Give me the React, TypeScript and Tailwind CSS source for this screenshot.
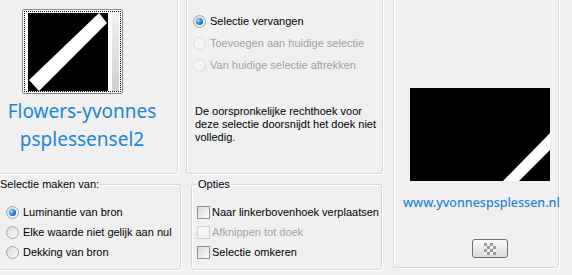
import React from 'react';

const etched =
  'border border-[#d3d8dd] rounded-[3px] shadow-[inset_1px_1px_0_#ffffff,1px_1px_0_#ffffff]';

function Radio({ checked, disabled, label }: { checked?: boolean; disabled?: boolean; label: string }) {
  return (
    <div className="flex items-center gap-[4px] h-[20px]">
      <span
        className={
          'w-[13px] h-[13px] rounded-full border flex items-center justify-center shrink-0 ' +
          (disabled
            ? 'border-[#dadada] bg-[#f3f3f3]'
            : 'border-[#a4a8ac] bg-gradient-to-br from-[#d6d8da] to-[#fbfbfb]')
        }
      >
        {checked && (
          <span className="w-[7px] h-[7px] rounded-full bg-[radial-gradient(circle_at_35%_35%,#9fd8ff,#1a74c8_60%,#0b4f94)]" />
        )}
      </span>
      <span className={disabled ? 'text-[#a2a2a2]' : 'text-black'}>{label}</span>
    </div>
  );
}

function Check({ disabled, label }: { disabled?: boolean; label: string }) {
  return (
    <div className="flex items-center gap-[2px] h-[20px]">
      <span
        className={
          'w-[13px] h-[13px] border shrink-0 ' +
          (disabled
            ? 'border-[#d0d0d0] bg-[#f4f4f4]'
            : 'border-[#8e9296] bg-gradient-to-br from-[#d4d6d8] to-[#ffffff]')
        }
      />
      <span className={disabled ? 'text-[#a2a2a2]' : 'text-black'}>{label}</span>
    </div>
  );
}

function Thumb() {
  return (
    <div className="w-[101px] h-[85px] border border-[#8a8a8a] rounded-[2px] bg-white p-[1px]">
      <div className="w-full h-full border border-dotted border-black pl-[3px] pt-[1px]">
        <svg width="91" height="78" viewBox="0 0 91 78">
          <rect x="0" y="0" width="80" height="78" fill="#000" />
          <rect x="80" y="0" width="4" height="78" fill="#fff" />
          <defs>
            <linearGradient id="sb" x1="0" y1="0" x2="0" y2="1">
              <stop offset="0" stopColor="#f2f2f2" />
              <stop offset="1" stopColor="#cfcfcf" />
            </linearGradient>
          </defs>
          <rect x="84" y="0" width="7" height="78" fill="url(#sb)" />
          <polygon points="1,67 11,78 79,10 71,0" fill="#fff" />
        </svg>
      </div>
    </div>
  );
}

function CheckerButton() {
  return (
    <button className="w-[36px] h-[19px] border border-[#707070] rounded-[3px] bg-gradient-to-b from-[#fbfbfb] to-[#d9d9d9] flex items-center justify-center">
      <svg width="12" height="12" viewBox="0 0 12 12">
        <rect width="12" height="12" fill="#f4f4f4" />
        {[0, 1, 2, 3].map((r) =>
          [0, 1, 2, 3].map((c) =>
            (r + c) % 2 === 0 ? (
              <rect key={r + '-' + c} x={c * 3} y={r * 3} width="3" height="3" fill="#9a9a9a" />
            ) : null
          )
        )}
      </svg>
    </button>
  );
}

export default function App() {
  const blue = "font-['Noto_Sans',sans-serif] text-[#2185d9]";
  return (
    <div className="w-[572px] h-[275px] bg-[#f0f0f0] overflow-hidden font-['Liberation_Sans',Arial,sans-serif] text-[11px] leading-[13px] text-black">
      <div className="flex -mt-[3px] -ml-[3px]">
        {/* left column */}
        <div className="w-[189px] flex flex-col">
          <div className={etched + ' w-[181px] h-[177px] pl-[24px] pt-[11px]'}>
            <Thumb />
            <div className={blue + ' -ml-[25px] w-[170px] text-center text-[19px] leading-[28px] mt-[3px]'}>
              Flowers-yvonnes
              <br />
              psplessensel2
            </div>
          </div>
          <fieldset className={etched + ' w-[184px] h-[92px] mt-[4px] pl-[8px] pt-[11px]'}>
            <legend className="px-[1px] -ml-[7px]">Selectie maken van:</legend>
            <Radio checked label="Luminantie van bron" />
            <Radio label="Elke waarde niet gelijk aan nul" />
            <Radio label="Dekking van bron" />
          </fieldset>
        </div>

        {/* middle column */}
        <div className="w-[197px] flex flex-col">
          <div className={etched + ' w-[197px] h-[177px] pl-[6px] pt-[12px]'}>
            <div className="flex flex-col">
              <div className="h-[22px] flex items-center"><Radio checked label="Selectie vervangen" /></div>
              <div className="h-[22px] flex items-center"><Radio disabled label="Toevoegen aan huidige selectie" /></div>
              <div className="h-[22px] flex items-center"><Radio disabled label="Van huidige selectie aftrekken" /></div>
            </div>
            <p className="mt-[29px] pl-[2px]">
              De oorspronkelijke rechthoek voor
              <br />
              deze selectie doorsnijdt het doek niet
              <br />
              volledig.
            </p>
          </div>
          <fieldset className={etched + ' w-[191px] h-[92px] mt-[4px] ml-[5px] pl-[5px] pt-[11px]'}>
            <legend className="px-[1px] ml-[0px]">Opties</legend>
            <Check label="Naar linkerbovenhoek verplaatsen" />
            <Check disabled label="Afknippen tot doek" />
            <Check label="Selectie omkeren" />
          </fieldset>
        </div>

        {/* right column */}
        <div className={etched + ' ml-[10px] w-[166px] h-[271px] flex flex-col'}>
          <div className="ml-[16px] mt-[90px]">
            <svg width="140" height="93" viewBox="0 0 140 93">
              <rect width="140" height="93" fill="#000" />
              <polygon points="93,93 140,45 140,62 109,93" fill="#fff" />
            </svg>
          </div>
          <div className={blue + ' ml-[9px] mt-[13px] whitespace-nowrap text-[12.5px] font-medium leading-[18px]'}>
            www.yvonnespsplessen.nl
          </div>
          <div className="ml-[78px] mt-[27px]">
            <CheckerButton />
          </div>
        </div>
      </div>
    </div>
  );
}
